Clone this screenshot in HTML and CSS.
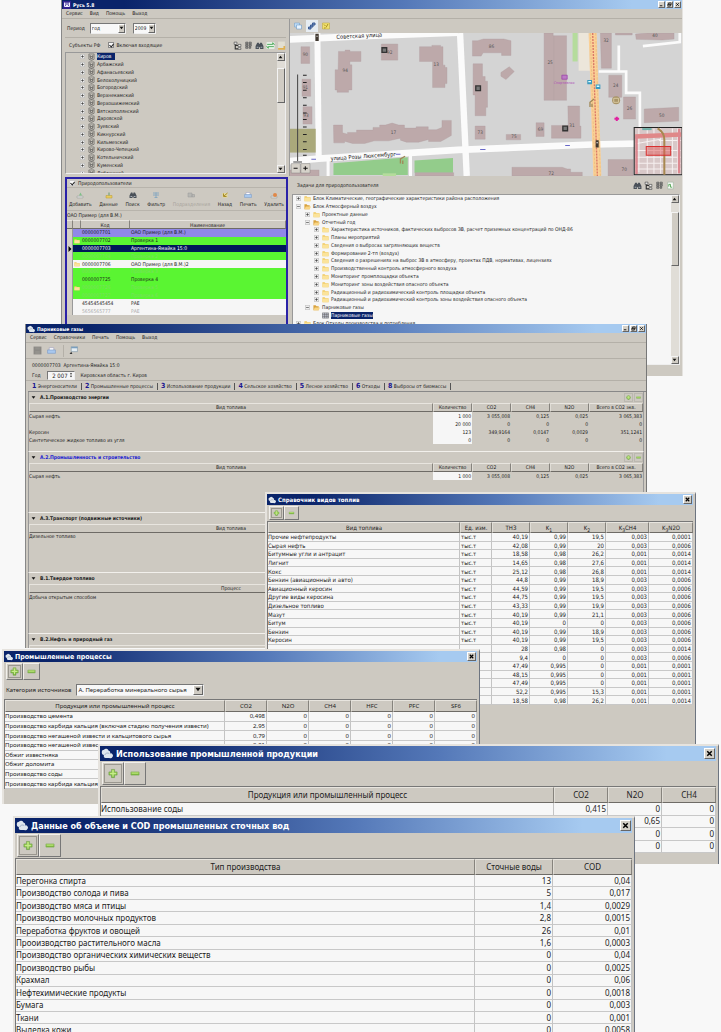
FILE: index.html
```html
<!DOCTYPE html>
<html lang="ru">
<head>
<meta charset="utf-8">
<title>Русь 5.8</title>
<link rel="stylesheet" href="styles.css">
</head>
<body>
<svg class="defs" aria-hidden="true">
<defs>
<linearGradient id="gr" x1="0" y1="0" x2="0" y2="1"><stop offset="0" stop-color="#b4e06a"/><stop offset="1" stop-color="#6fb42c"/></linearGradient>
<symbol id="plus" viewBox="0 0 16 16"><path d="M5.500 1.500h5v4h4v5h-4v4h-5v-4h-4v-5h4z" fill="url(#gr)" stroke="#6a9c48"/><path d="M7 3h2v4h4v2H9v4H7V9H3V7h4z" fill="#c6ea8c"/></symbol>
<symbol id="minus" viewBox="0 0 16 16"><path d="M1.500 5.500h13v5h-13z" fill="url(#gr)" stroke="#7fa85c"/><path d="M3 7h10v1H3z" fill="#c6ea8c"/></symbol>
<symbol id="cloud" viewBox="0 0 16 14"><path d="M1 5a3 3 0 0 1 3-3a3.500 3.500 0 0 1 6 1a3 3 0 0 1 2 4a3 3 0 0 1 3 5q-1 2-4 1H6a3 3 0 0 1-2-4Q1 9 1 5z" fill="#dfe6ee"/><path d="M5 9a4 4 0 0 1 6-2" stroke="#8fa0b8" fill="none"/></symbol>
<symbol id="folder" viewBox="0 0 16 16"><path d="M1 3h5l2 2h7v9H1z" fill="#f0c860"/><path d="M1 6h14v8H1z" fill="#fbe39a"/></symbol>
<symbol id="open" viewBox="0 0 16 16"><path d="M1 3h5l2 2h5v9H1z" fill="#d9a23c"/><path d="M4 8h12l-3 6H1z" fill="#f8d585"/></symbol>
<symbol id="crest" viewBox="0 0 16 16"><path d="M2 1h12v12l-6 3-6-3z" fill="#c8c4bc" stroke="#333"/><path d="M5 4v5l3-2 3 2V4M5 12h6" stroke="#333" stroke-width="1.500" fill="none"/></symbol>
<symbol id="expand" viewBox="0 0 9 9"><path d="M.5.5h8v8h-8z" fill="#eee" stroke="#aaa"/><path d="M2 4.500h5M4.500 2v5" stroke="#222"/></symbol>
<symbol id="collapse" viewBox="0 0 9 9"><path d="M.5.5h8v8h-8z" fill="#eee" stroke="#aaa"/><path d="M2 4.500h5" stroke="#222"/></symbol>
<symbol id="nodes" viewBox="0 0 16 16"><path d="M2 2h5v4H2zM9 6h5v4H9zM9 12h5v3H9z" fill="#eee" stroke="#333"/><path d="M4 6v8h5M4 8h5" stroke="#333" fill="none" stroke-width="2"/></symbol>
<symbol id="nodes2" viewBox="0 0 16 16"><path d="M3 2h4v3H3zM9 2h4v3H9zM3 6h4v3H3zM9 6h4v3H9zM3 10h4v3H3zM9 10h3v3H9z" fill="#999" stroke="#444"/></symbol>
<symbol id="binoc" viewBox="0 0 16 16"><path d="M4 3h3v2h2V3h3l3 6v5H9v-3H7v3H1V9z" fill="#4a5058"/><path d="M3 10h3v2H3zM10 10h3v2h-3z" fill="#a8b0b8"/></symbol>
<symbol id="refresh" viewBox="0 0 16 16"><path d="M1 2h14v12H1z" fill="#e8f4e8"/><path d="M2 6h10V3l3 4M14 10H4v3l-3-4" stroke="#38a048" stroke-width="1.500" fill="none"/></symbol>
<symbol id="sheet" viewBox="0 0 16 16"><path d="M2 1h12v14H2z" fill="#e2dfd2"/><path d="M2 14h11V9" stroke="#e0b050" stroke-width="3" fill="none"/></symbol>
<symbol id="doc" viewBox="0 0 16 16"><path d="M3 2h10v12H3z" fill="#f8fbf8" stroke="#9ab09a"/><path d="M5 10V6h3v5h3" stroke="#4ba04b" stroke-width="1.500" fill="none"/></symbol>
<symbol id="printer" viewBox="0 0 16 16"><path d="M4 3h8v5H4z" fill="#fff" stroke="#99b"/><path d="M1 7h14v6H1z" fill="#a9c8ee" stroke="#7898c4"/></symbol>
<symbol id="layers" viewBox="0 0 16 16"><path d="M1 2h10v8H1z" fill="#bfdcf5" stroke="#6a98c8"/><path d="M5 6h10v8H5z" fill="#e8f4ff" stroke="#5a8cc0"/></symbol>
<symbol id="down" viewBox="0 0 8 8"><path d="M1 2h6L4 6z" fill="#111"/></symbol>
<symbol id="up" viewBox="0 0 8 8"><path d="M1 6h6L4 2z" fill="#111"/></symbol>
<symbol id="close" viewBox="0 0 12 12"><path d="M3 3l6 6M9 3l-6 6" stroke="#000" stroke-width="2"/></symbol>
<symbol id="min" viewBox="0 0 12 12"><path d="M2 9h6" stroke="#000" stroke-width="2"/></symbol>
<symbol id="max" viewBox="0 0 12 12"><path d="M4 2h6v5H4zM2 5h6v5H2z" fill="#d0ccc4" stroke="#000" stroke-width="1.500"/></symbol>
</defs>
</svg>
<main class="desktop">

<section class="win main-win">
<header class="title"><svg class="ico" viewBox="0 0 16 16"><path d="M0 0h16v16H0z" fill="#30208c"/><path d="M3 3v8h10V3M6 3v6h4V3" stroke="#f0f0ff" stroke-width="2" fill="none"/></svg><h1>Русь 5.8</h1><span class="ctl"><button aria-label="Свернуть"><svg><use href="#min"/></svg></button><button aria-label="Развернуть"><svg><use href="#max"/></svg></button><button aria-label="Закрыть"><svg><use href="#close"/></svg></button></span></header>
<nav class="menu"><a href="#">Сервис</a><a href="#">Вид</a><a href="#">Помощь</a><a href="#">Выход</a></nav>
<div class="upper">
 <div class="regions">
  <div class="period"><label for="per">Период</label><span class="combo c-per"><select id="per"><option>год</option></select><i><svg><use href="#down"/></svg></i></span><span class="combo c-year"><select aria-label="Год"><option>2009</option></select><i><svg><use href="#down"/></svg></i></span></div>
  <div class="subj"><span>Субъекты РФ</span><input type="checkbox" id="inc" checked><label for="inc">Включая входящие</label><span class="tools"><svg><use href="#nodes"/></svg><svg><use href="#nodes2"/></svg><svg><use href="#binoc"/></svg><svg><use href="#refresh"/></svg><svg><use href="#sheet"/></svg></span></div>
  <div class="treebox">
   <ul class="tree t-reg">
    <li><svg><use href="#expand"/></svg><svg class="ic"><use href="#crest"/></svg><span class="sel wide">Киров</span></li>
    <li><svg><use href="#expand"/></svg><svg class="ic"><use href="#crest"/></svg><span>Арбажский</span></li>
    <li><svg><use href="#expand"/></svg><svg class="ic"><use href="#crest"/></svg><span>Афанасьевский</span></li>
    <li><svg><use href="#expand"/></svg><svg class="ic"><use href="#crest"/></svg><span>Белохолуницкий</span></li>
    <li><svg><use href="#expand"/></svg><svg class="ic"><use href="#crest"/></svg><span>Богородский</span></li>
    <li><svg><use href="#expand"/></svg><svg class="ic"><use href="#crest"/></svg><span>Верхнекамский</span></li>
    <li><svg><use href="#expand"/></svg><svg class="ic"><use href="#crest"/></svg><span>Верхошижемский</span></li>
    <li><svg><use href="#expand"/></svg><svg class="ic"><use href="#crest"/></svg><span>Вятскополянский</span></li>
    <li><svg><use href="#expand"/></svg><svg class="ic"><use href="#crest"/></svg><span>Даровской</span></li>
    <li><svg><use href="#expand"/></svg><svg class="ic"><use href="#crest"/></svg><span>Зуевский</span></li>
    <li><svg><use href="#expand"/></svg><svg class="ic"><use href="#crest"/></svg><span>Кикнурский</span></li>
    <li><svg><use href="#expand"/></svg><svg class="ic"><use href="#crest"/></svg><span>Кильмезский</span></li>
    <li><svg><use href="#expand"/></svg><svg class="ic"><use href="#crest"/></svg><span>Кирово-Чепецкий</span></li>
    <li><svg><use href="#expand"/></svg><svg class="ic"><use href="#crest"/></svg><span>Котельничский</span></li>
    <li><svg><use href="#expand"/></svg><svg class="ic"><use href="#crest"/></svg><span>Куменский</span></li>
    <li><svg><use href="#expand"/></svg><svg class="ic"><use href="#crest"/></svg><span>Лебяжский</span></li>
   </ul>
   <div class="scroll"><b><svg><use href="#up"/></svg></b><i class="thumb th1"></i><b><svg><use href="#down"/></svg></b></div>
  </div>
 </div>
 <div class="mapcol">
  <div class="maptools"><button aria-label="Слои"><svg><use href="#layers"/></svg></button><button class="on" aria-label="Объекты"><svg viewBox="0 0 16 16"><path d="M1 10h5v4H1zM5 6h5v4H5zM9 2h5v4H9z" fill="#6c8cc0" stroke="#3c5c94" stroke-width="2"/></svg></button><button aria-label="Легенда"><svg viewBox="0 0 16 16"><path d="M1 2h14v12H1z" fill="#f0e070" stroke="#b8a030"/><path d="M4 5l3 3M12 4l-4 7M4 12h3" stroke="#a89020" stroke-width="2"/></svg></button></div>
  <svg class="map" viewBox="15 99 1177 427" preserveAspectRatio="xMidYMid slice" role="img" aria-label="Карта">
   <path d="M15 99h1177v427H15z" fill="#d4d4d4"/>
   <g fill="none" stroke="#fbfbfb">
    <path d="M15 118L290 106 520 98" stroke-width="20"/>
    <path d="M100 99L104 470" stroke-width="18"/><path d="M526 99L546 526" stroke-width="19"/>
    <path d="M15 482L104 474 520 448 920 432 1192 426" stroke-width="20"/>
    <path d="M378 460v66M132 480v46" stroke-width="9"/>
    <path d="M940 214h82v64h41v145M1000 136v76M1072 138l110-12V99" stroke-width="8"/>
   </g>
   <path d="M862 99h15v85h-15z" fill="#b5dc9c"/><path d="M880 99h30l4 113h-34z" fill="#ece6da"/>
   <path d="M148 488l222-18v53H148zM390 480l115-8v44H390z" fill="#93cc8b"/><path d="M295 518h40v8h-40z" fill="#b5dc9c"/>
   <path d="M15 385h80v71H15z" fill="#aaa97b"/>
   <path d="M922 99L936 526" stroke="#fbd095" stroke-width="24"/><path d="M922 99L936 526" stroke="#d97868" stroke-width="4" stroke-dasharray="6 3"/><path d="M915 99L929 526M931 99L945 526" stroke="#e2bb80" stroke-width="2" stroke-dasharray="8 4"/>
   <g fill="#bda9aa" stroke="#ae9c9e">
    <path d="M51 140h26v50H51zM54 237h26v51H54zM57 319h27v52H57z"/>
    <path d="M163 154h20v-4h14v4h33v30h-33v10h6v75h-10v7h-34v-7h-6v-60h9z"/>
    <path d="M291 132h49v48h-49z"/>
    <path d="M405 140h37v-4h26v4h7v55h6v7h6v48h-6v12h-37v-78h-39z"/>
    <path d="M148 374h27v23l15 4v-5h27v-7h49v-8h20v-7h17l20-6 20 6h17v9h35v-4h36v9h24l17-7v-21h28v45l-17 10-15 8h-36v-6l-30 8h-36l-18-6v-6l-35 8h-43l-29 8h-36l-24-7v5h-32z"/>
    <path d="M563 122h15l18-5h60l22 5v44h-28v-8h-55l-6 10h-26zM565 191h28v38h8v14h7v78h-5v25h-32v-62h-6zM648 217l25-17 15 14-25 24-15-10zM571 377h30v39h-30zM664 402h43v16h-43zM753 367h24v41h-24z"/>
    <path d="M777 99h27v8h40v193h-67zM848 317h35v60h4v36h-88v-38h50zM945 99h33v105h-30zM970 225h39v66h-39zM1014 290h36v66h-36zM1076 326l103-5v41l-103 5zM1050 102l35-3h80v18l-35 3-78-2zM990 99h50v6h-50z"/>
    <path d="M681 500h150l15 5h10v10h35v11H681zM968 477h75v49h-75zM15 508h90v18H15zM392 516h115v10H392z"/>
    <path d="M806 107v193" fill="none"/>
   </g>
   <g class="mapnum"><text x="56" y="169">90</text><text x="56" y="266">91</text><text x="58" y="349">93</text><text x="175" y="214">94</text><text x="308" y="161">92</text><text x="447" y="199">13</text><text x="319" y="401">17</text><text x="612" y="145">86</text><text x="787" y="191">25</text><text x="578" y="402">73</text><text x="679" y="413">75</text><text x="758" y="392">69</text><text x="852" y="379">31</text><text x="954" y="126">32</text><text x="983" y="260">24</text><text x="1024" y="328">26</text><text x="1120" y="349">50</text><text x="1008" y="511">70</text><text x="790" y="523">72</text><text x="1100" y="112">40</text></g>
   <g fill="#777" stroke="#333" stroke-width="4"><path d="M293 143h14v14h-14zM573 257h14v14h-14zM833 377h14v14h-14z"/></g>
   <path d="M906 239h14v13h-14zM931 253h14v13h-14z" fill="#3a9ac0"/><path d="M909 242h8v4h-8zM934 256h8v4h-8z" fill="#dff"/>
   <path d="M830 225h16v12h-16z" fill="#bc7cc4" stroke="#9838a8" stroke-width="2"/><text x="806" y="251" class="ural">Спортивная</text>
   <circle cx="992" cy="300" r="12" fill="#a89468"/><path d="M985 294h14v12h-14z" stroke="#eee0b8" fill="none" stroke-width="2"/>
   <path d="M994 349v13M987 355h14" stroke="#e020a0" stroke-width="6"/>
   <path d="M914 320v-14l12-10M348 489v-14l14-8M920 310v10M355 480v10" stroke="#a08858" stroke-width="4" fill="none"/>
   <path d="M931 419h9v22h-9zM94 101h10v22H94z" fill="#403830"/><path d="M933 427h5M97 109h4" stroke="#ddd" stroke-width="3"/>
   <path d="M586 447h16M840 435h14M334 461h14M82 476h14" stroke="#6868c8" stroke-width="3"/>
   <text x="157" y="117" class="street" transform="rotate(-3 157 117)">Советская улица</text>
   <text x="140" y="480" class="street" transform="rotate(-4 140 480)">улица Розы Люксембург</text>
   <path d="M41 223v258M28 484h26" stroke="#444" stroke-width="3"/><path d="M57 225h11M57 247h11M57 270h11M57 292h11M57 315h11M57 338h11M57 357h11M57 380h11M57 402h11M57 424h11M57 447h11M57 464h11" stroke="#222" stroke-width="3"/>
   <g stroke="#666"><path d="M22 489h27v28H22zM51 489h27v28H51z" fill="#d6d2ca"/><path d="M29 503h12M58 503h13M64 497v12" stroke="#111" stroke-width="3"/></g>
   <path d="M1046 381h143v141h-143z" fill="#d8c8c8" stroke="#222" stroke-width="3"/>
   <path d="M1050 430L1125 416M1060 385v130M1085 384v135M1105 384v135M1125 384v135M1160 384v135M1176 384v135M1050 450h135M1050 470h135M1050 488h135M1050 505h135M1120 420h66" stroke="#f6f0f0" stroke-width="3"/>
   <path d="M1049 408L1186 402" stroke="#e08888" stroke-width="13"/><path d="M1053 405v115M1180 385v133" stroke="#dd8890" stroke-width="7"/><path d="M1116 384q20 12 20 34v104" stroke="#a88850" stroke-width="6" fill="none"/><path d="M1070 383h28v6h-28z" fill="#70b0a8"/>
   <path d="M1082 438h73v26h-73z" fill="#e05858" fill-opacity=".5" stroke="#d83030" stroke-width="3"/>
  </svg>
 </div>
</div>
<div class="lower">
 <div class="users">
  <div class="uhead"><input type="checkbox" id="usr" checked><label for="usr">Природопользователи</label></div>
  <div class="ubar"><button><svg viewBox="0 0 16 16"><path d="M2 10h12v4H2z" fill="#d8dcd8" stroke="#999"/><path d="M6 9l3-6 3 6z" fill="#7cc088"/></svg>Добавить</button><button><svg viewBox="0 0 16 16"><path d="M2 9h12v5H2z" fill="#e8cc60" stroke="#b89830"/><path d="M8 3v6" stroke="#8a8" stroke-width="3"/></svg>Данные</button><button><svg><use href="#binoc"/></svg>Поиск</button><button><svg viewBox="0 0 16 16"><path d="M2 4h12M2 8h12M8 3v11M5 13h6" stroke="#88a8c0" stroke-width="2"/></svg>Фильтр</button><button disabled><svg viewBox="0 0 16 16"><path d="M2 4h8v8H2zM10 7h5v5h-5z" fill="#b8b8b4" stroke="#999"/></svg>Подразделения</button><button><svg viewBox="0 0 16 16"><path d="M3 4h10v9H3z" fill="#e4d898"/><path d="M13 4L6 10M5 5v6h6" stroke="#a88c28" stroke-width="2" fill="none"/></svg>Назад</button><button><svg><use href="#printer"/></svg>Печать</button><button><svg viewBox="0 0 16 16"><path d="M2 10h12v4H2z" fill="#d8dcd8" stroke="#999"/><circle cx="10" cy="8" r="4" fill="#e08848"/></svg>Удалить</button></div>
  <div class="ucap">ОАО Пример (для В.М.)</div>
  <table class="utable">
   <colgroup><col class="w6"><col class="w8"><col class="w49"><col></colgroup>
   <thead><tr><th><th><th>Код<th>Наименование</thead>
   <tbody>
   <tr class="vio"><td><td><td>0000007701<td>ОАО Пример (для В.М.)
   <tr class="grn"><td><td><svg><use href="#folder"/></svg><td>0000007702<td>Проверка 1
   <tr class="nav"><td><svg viewBox="0 0 8 8"><path d="M2 0v8l4-4z" fill="#000"/></svg><td><td>0000007703<td>Аргентина-Ямайка 15:0
   <tr class="grn dim"><td><td><td>0000007704<td>Проверка 2
   <tr><td><td><svg><use href="#folder"/></svg><td>0000007706<td>ОАО Пример (для В.М.)2
   <tr class="grn dim"><td><td><td>0000007707<td>Проверка 3
   <tr class="grn"><td><td><td>0000007725<td>Проверка 4
   <tr class="grn dim"><td><td><svg><use href="#folder"/></svg><td>0000007726<td>Проверка 5
   <tr class="grn dim"><td><td><td>0000007727<td>Проверка 6
   <tr><td><td><td>45454545454<td>РАЕ
   <tr class="gray"><td><td><td>5656565777<td>РАЕ
   </tbody>
  </table>
 </div>
 <div class="tasks">
  <div class="thead"><span>Задачи для природопользователя</span><span class="tools"><svg><use href="#binoc"/></svg><svg><use href="#nodes"/></svg><svg><use href="#nodes2"/></svg><svg><use href="#doc"/></svg></span></div>
  <div class="treebox white">
   <ul class="tree t-task">
    <li><svg><use href="#expand"/></svg><svg class="ic"><use href="#folder"/></svg><span>Блок Климатические, географические характеристики района расположения</span></li>
    <li><svg><use href="#collapse"/></svg><svg class="ic"><use href="#open"/></svg><span>Блок Атмосферный воздух</span></li>
    <li class="l2"><svg><use href="#expand"/></svg><svg class="ic"><use href="#folder"/></svg><span>Проектные данные</span></li>
    <li class="l2"><svg><use href="#collapse"/></svg><svg class="ic"><use href="#open"/></svg><span>Отчетный год</span></li>
    <li class="l3"><svg><use href="#expand"/></svg><svg class="ic"><use href="#folder"/></svg><span>Характеристика источников, фактических выбросов ЗВ, расчет приземных концентраций по ОНД-86</span></li>
    <li class="l3"><svg><use href="#expand"/></svg><svg class="ic"><use href="#folder"/></svg><span>Планы мероприятий</span></li>
    <li class="l3"><svg><use href="#expand"/></svg><svg class="ic"><use href="#folder"/></svg><span>Сведения о выбросах загрязняющих веществ</span></li>
    <li class="l3"><svg><use href="#expand"/></svg><svg class="ic"><use href="#folder"/></svg><span>Формирование 2-тп (воздух)</span></li>
    <li class="l3"><svg><use href="#expand"/></svg><svg class="ic"><use href="#folder"/></svg><span>Сведения о разрешениях на выброс ЗВ в атмосферу, проектах ПДВ, нормативах, лицензиях</span></li>
    <li class="l3"><svg><use href="#expand"/></svg><svg class="ic"><use href="#folder"/></svg><span>Производственный контроль атмосферного воздуха</span></li>
    <li class="l3"><svg><use href="#expand"/></svg><svg class="ic"><use href="#folder"/></svg><span>Мониторинг промплощадки объекта</span></li>
    <li class="l3"><svg><use href="#expand"/></svg><svg class="ic"><use href="#folder"/></svg><span>Мониторинг зоны воздействия опасного объекта</span></li>
    <li class="l3"><svg><use href="#expand"/></svg><svg class="ic"><use href="#folder"/></svg><span>Радиационный и радиохимический контроль площадки объекта</span></li>
    <li class="l3"><svg><use href="#expand"/></svg><svg class="ic"><use href="#folder"/></svg><span>Радиационный и радиохимический контроль зоны воздействия опасного объекта</span></li>
    <li class="l2"><svg><use href="#collapse"/></svg><svg class="ic"><use href="#open"/></svg><span>Парниковые газы</span></li>
    <li class="l3"><svg></svg><svg class="ic" viewBox="0 0 16 16"><path d="M1 2h14v12H1z" fill="#c8ccd8" stroke="#444"/><path d="M1 6h14M1 10h14M6 2v12M11 2v12" stroke="#444"/></svg><span class="sel">Парниковые газы</span></li>
    <li><svg><use href="#expand"/></svg><svg class="ic"><use href="#folder"/></svg><span>Блок Отходы производства и потребления</span></li>
   </ul>
   <div class="scroll"><b><svg><use href="#up"/></svg></b><i class="thumb th2"></i><b><svg><use href="#down"/></svg></b></div>
  </div>
 </div>
</div>
</section>

<section class="win gas-win">
<header class="title"><svg class="ico"><use href="#cloud"/></svg><h2>Парниковые газы</h2><span class="ctl"><button aria-label="Свернуть"><svg><use href="#min"/></svg></button><button aria-label="Развернуть"><svg><use href="#max"/></svg></button><button aria-label="Закрыть"><svg><use href="#close"/></svg></button></span></header>
<nav class="menu"><a href="#">Сервис</a><a href="#">Справочники</a><a href="#">Печать</a><a href="#">Помощь</a><a href="#">Выход</a></nav>
<div class="gbar"><button aria-label="Сохранить"><svg viewBox="0 0 16 16"><path d="M1 1h14v14H1z" fill="#8c8a86"/><path d="M4 2h8v4H4zM4 9h8v5H4z" fill="#94928d"/></svg></button><button aria-label="Печать"><svg><use href="#printer"/></svg></button><i></i><button aria-label="Окно"><svg viewBox="0 0 16 16"><path d="M4 1h11v9H4z" fill="#e6eef4" stroke="#7890a0"/><path d="M4 3h11" stroke="#6c94b8" stroke-width="2"/><path d="M4 10l-3 4h5z" fill="#333"/></svg></button></div>
<div class="ginfo"><p>0000007703&nbsp; Аргентина-Ямайка 15:0</p><p><label for="yr">Год</label><span class="spin"><input id="yr" value="2 007"><i><svg><use href="#up"/></svg><svg><use href="#down"/></svg></i></span><span>Кировская область г. Киров</span></p></div>
<nav class="tabs"><a href="#"><b>1</b> Энергоносители</a><a href="#"><b>2</b> Промышленные процессы</a><a href="#"><b>3</b> Использование продукции</a><a href="#"><b>4</b> Сельское хозяйство</a><a href="#"><b>5</b> Лесное хозяйство</a><a href="#"><b>6</b> Отходы</a><a href="#"><b>8</b> Выбросы от биомассы</a></nav>
<div class="groups">
 <section><h3><svg><use href="#down"/></svg>А.1.Производство энергии<span class="pm"><button aria-label="Добавить"><svg><use href="#plus"/></svg></button><button aria-label="Удалить"><svg><use href="#minus"/></svg></button></span></h3>
 <table class="gt"><colgroup><col><col class="w39"><col class="w39"><col class="w39"><col class="w39"><col class="w54"></colgroup><thead><tr><th>Вид топлива<th>Количество<th>CO2<th>CH4<th>N2O<th>Всего в CO2 экв.</thead><tbody>
 <tr><td>Сырая нефть<td>1 000<td>3 055,008<td>0,125<td>0,025<td>3 065,383
 <tr><td><td>20 000<td>0<td>0<td>0<td>0
 <tr><td>Керосин<td>123<td>349,9164<td>0,0147<td>0,0029<td>351,1241
 <tr><td>Синтетическое жидкое топливо из угля<td>0<td>0<td>0<td>0<td>0</tbody></table></section>
 <section><h3 class="blue"><svg><use href="#down"/></svg>А.2.Промышленность и строительство<span class="pm"><button aria-label="Добавить"><svg><use href="#plus"/></svg></button><button aria-label="Удалить"><svg><use href="#minus"/></svg></button></span></h3>
 <table class="gt"><colgroup><col><col class="w39"><col class="w39"><col class="w39"><col class="w39"><col class="w54"></colgroup><thead><tr><th>Вид топлива<th>Количество<th>CO2<th>CH4<th>N2O<th>Всего в CO2 экв.</thead><tbody>
 <tr><td>Сырая нефть<td>1 000<td>3 055,008<td>0,125<td>0,025<td>3 065,383</tbody></table></section>
 <section><h3><svg><use href="#down"/></svg>А.3.Транспорт (подвижные источники)</h3>
 <table class="gt"><colgroup><col><col class="w210"></colgroup><thead><tr><th>Вид топлива<th></thead><tbody><tr><td>Дизельное топливо<td></tbody></table></section>
 <section><h3><svg><use href="#down"/></svg>В.1.Твердое топливо</h3>
 <table class="gt"><colgroup><col><col class="w210"></colgroup><thead><tr><th>Процесс<th></thead><tbody><tr><td>Добыча открытым способом<td></tbody></table></section>
 <section><h3><svg><use href="#down"/></svg>В.2.Нефть и природный газ</h3>
 <table class="gt"><colgroup><col><col class="w210"></colgroup><thead><tr><th><th></thead></table></section>
</div>
</section>

<section class="win dlg fuel-win">
<header class="title"><svg class="ico"><use href="#cloud"/></svg><h2>Справочник видов топлив</h2><span class="ctl"><button aria-label="Закрыть"><svg><use href="#close"/></svg></button></span></header>
<div class="pmbar"><button aria-label="Добавить"><svg><use href="#plus"/></svg></button><button aria-label="Удалить"><svg><use href="#minus"/></svg></button></div>
<table class="dt"><colgroup><col><col class="w32"><col class="w38"><col class="w38"><col class="w38"><col class="w43"><col class="w44"></colgroup>
<thead><tr><th>Вид топлива<th>Ед. изм.<th>ТНЗ<th>K<sub>1</sub><th>K<sub>2</sub><th>K<sub>3</sub>CH4<th>K<sub>3</sub>N2O</thead><tbody>
<tr><td>Прочие нефтепродукты<td>тыс.т<td>40,19<td>0,99<td>19,5<td>0,003<td>0,0001
<tr><td>Сырая нефть<td>тыс.т<td>42,08<td>0,99<td>20<td>0,003<td>0,0006
<tr><td>Битумные угли и антрацит<td>тыс.т<td>18,58<td>0,98<td>26,2<td>0,001<td>0,0014
<tr><td>Лигнит<td>тыс.т<td>14,65<td>0,98<td>27,6<td>0,001<td>0,0014
<tr><td>Кокс<td>тыс.т<td>25,12<td>0,98<td>26,8<td>0,001<td>0,0014
<tr><td>Бензин (авиационный и авто)<td>тыс.т<td>44,8<td>0,99<td>18,9<td>0,003<td>0,0006
<tr><td>Авиационный керосин<td>тыс.т<td>44,59<td>0,99<td>19,5<td>0,003<td>0,0006
<tr><td>Другие виды керосина<td>тыс.т<td>44,75<td>0,99<td>19,5<td>0,003<td>0,0006
<tr><td>Дизельное топливо<td>тыс.т<td>43,33<td>0,99<td>19,9<td>0,003<td>0,0006
<tr><td>Мазут<td>тыс.т<td>40,19<td>0,99<td>21,1<td>0,003<td>0,0006
<tr><td>Битум<td>тыс.т<td>40,19<td>0<td>0<td>0,003<td>0,0006
<tr><td>Бензин<td>тыс.т<td>40,19<td>0,99<td>18,9<td>0,003<td>0,0006
<tr><td>Керосин<td>тыс.т<td>40,19<td>0,99<td>19,5<td>0,003<td>0,0006
<tr><td><td><td>28<td>0,98<td>0<td>0,003<td>0,0014
<tr><td><td><td>9,4<td>0<td>0<td>0,003<td>0,0006
<tr><td><td><td>47,49<td>0,995<td>0<td>0,001<td>0,0001
<tr><td><td><td>48,15<td>0,995<td>0<td>0,001<td>0,0001
<tr><td><td><td>47,49<td>0,995<td>0<td>0,001<td>0,0001
<tr><td><td><td>52,2<td>0,995<td>15,3<td>0,001<td>0,0001
<tr><td><td><td>18,58<td>0,98<td>26,2<td>0,001<td>0,0014
</tbody></table>
</section>

<section class="win dlg proc-win">
<header class="title"><svg class="ico"><use href="#cloud"/></svg><h2>Промышленные процессы</h2><span class="ctl"><button aria-label="Закрыть"><svg><use href="#close"/></svg></button></span></header>
<div class="pmbar"><button aria-label="Добавить"><svg><use href="#plus"/></svg></button><button aria-label="Удалить"><svg><use href="#minus"/></svg></button></div>
<div class="cat"><label for="cat">Категория источников</label><span class="combo"><select id="cat"><option>А. Переработка минерального сырья</option></select><i><svg><use href="#down"/></svg></i></span></div>
<table class="dt"><colgroup><col><col class="w42"><col class="w42"><col class="w42"><col class="w42"><col class="w42"><col class="w42"></colgroup>
<thead><tr><th>Продукция или промышленный процесс<th>CO2<th>N2O<th>CH4<th>HFC<th>PFC<th>SF6</thead><tbody>
<tr><td>Производство цемента<td>0,498<td>0<td>0<td>0<td>0<td>0
<tr><td>Производство карбида кальция (включая стадию получения извести)<td>2,95<td>0<td>0<td>0<td>0<td>0
<tr><td>Производство негашеной извести и кальцитового сырья<td>0,79<td>0<td>0<td>0<td>0<td>0
<tr><td>Производство негашеной извести из доломитового сырья<td>0,91<td>0<td>0<td>0<td>0<td>0
<tr><td>Обжиг известняка<td><td><td><td><td><td>
<tr><td>Обжиг доломита<td><td><td><td><td><td>
<tr><td>Производство соды<td><td><td><td><td><td>
<tr><td>Производство карбида кальция<td><td><td><td><td><td>
</tbody></table>
</section>

<section class="win dlg big use-win">
<header class="title"><svg class="ico"><use href="#cloud"/></svg><h2>Использование промышленной продукции</h2><span class="ctl"><button aria-label="Закрыть"><svg><use href="#close"/></svg></button></span></header>
<div class="pmbar"><button aria-label="Добавить"><svg><use href="#plus"/></svg></button><button aria-label="Удалить"><svg><use href="#minus"/></svg></button></div>
<table class="dt"><colgroup><col><col class="w54"><col class="w54"><col class="w54"></colgroup>
<thead><tr><th>Продукция или промышленный процесс<th>CO2<th>N2O<th>CH4</thead><tbody>
<tr><td>Использование соды<td>0,415<td>0<td>0
<tr><td><td><td>0,65<td>0
<tr><td><td><td>0<td>0
<tr><td><td><td>0<td>0
</tbody></table>
</section>

<section class="win dlg big cod-win">
<header class="title"><svg class="ico"><use href="#cloud"/></svg><h2>Данные об объеме и COD промышленных сточных вод</h2><span class="ctl"><button aria-label="Закрыть"><svg><use href="#close"/></svg></button></span></header>
<div class="pmbar"><button aria-label="Добавить"><svg><use href="#plus"/></svg></button><button aria-label="Удалить"><svg><use href="#minus"/></svg></button></div>
<table class="dt"><colgroup><col><col class="w78"><col class="w79"></colgroup>
<thead><tr><th>Тип производства<th>Сточные воды<th>COD</thead><tbody>
<tr><td>Перегонка спирта<td>13<td>0,04
<tr><td>Производство солода и пива<td>5<td>0,017
<tr><td>Производство мяса и птицы<td>1,4<td>0,0029
<tr><td>Производство молочных продуктов<td>2,8<td>0,0015
<tr><td>Переработка фруктов и овощей<td>26<td>0,01
<tr><td>Прооизводство растительного масла<td>1,6<td>0,0003
<tr><td>Производство органических химических веществ<td>0<td>0,04
<tr><td>Производство рыбы<td>0<td>0,0025
<tr><td>Крахмал<td>0<td>0,06
<tr><td>Нефтехимические продукты<td>0<td>0,0018
<tr><td>Бумага<td>0<td>0,003
<tr><td>Ткани<td>0<td>0,001
<tr><td>Выделка кожи<td>0<td>0,0058
</tbody></table>
</section>
</main>
</body>
</html>
```

FILE: styles.css
```css
* { box-sizing: border-box; }
body, h1, h2, h3, p, ul { margin: 0; padding: 0; }
html, body { height: 100%; }
body { background: #f8f8f8; color: #1c1c1c; font: 5px/7px "DejaVu Sans Condensed", "DejaVu Sans", sans-serif; }
button, input, select { font: inherit; color: inherit; margin: 0; padding: 0; border: 0; background: none; border-radius: 0; }
a { color: inherit; text-decoration: none; }
svg { display: block; }
.defs { position: absolute; width: 0; height: 0; }
.desktop { position: relative; height: 100%; overflow: hidden; white-space: nowrap; }

/* windows */
.win { position: absolute; display: flex; flex-direction: column; overflow: hidden; background: #cdc9c1; }
.main-win { left: 61px; right: 38px; top: 0; height: 376px; border-right: 1px solid #e4e2de; border-left: 1px solid #888; }
.gas-win { left: 25px; right: 74px; top: 324px; height: 324px; border-left: 1px solid #888; border-right: 1px solid #777; }
.fuel-win { left: 265px; right: 25px; top: 492px; height: 252px; font-size: 6px; line-height: 7px; }
.proc-win { left: 2px; right: 241px; top: 649px; height: 155px; font-size: 6px; line-height: 8px; }
.use-win { left: 98px; right: 2px; top: 744px; height: 120px; }
.cod-win { left: 13px; right: 86px; top: 816px; height: 230px; }
.big { font-size: 8px; line-height: 10px; }
.proc-win .dt, .cat, .big .dt { font-family: "Noto Sans", "Open Sans", sans-serif; }
.dlg { border: 1px solid #e6e3de; border-width: 2px 2px 0 2px; border-right: 1px solid #6d7480; padding-right: 2px; }

.title { flex: none; display: flex; align-items: center; gap: 2px; height: 9px; padding: 0 1px; background: linear-gradient(90deg, #0a246a 10%, #5478b8 55%, #a6caf0 92%); color: #fff; }
.title h1, .title h2 { flex: 1; font-size: 5px; line-height: 8px; font-weight: bold; }
.ico { width: 8px; height: 8px; }
.ctl { display: flex; gap: 1px; }
.ctl button { width: 7px; height: 7px; background: #d4d0c8; border: 1px solid #666; border-top-color: #fff; border-left-color: #fff; }
.ctl svg { width: 5px; height: 5px; }
.fuel-win .title { height: 11px; }
.fuel-win h2 { font-size: 6px; }
.proc-win .title { height: 11px; }
.proc-win h2 { font-size: 7px; }
.dlg .ctl button { width: 9px; height: 9px; }
.dlg .ctl svg { width: 7px; height: 7px; }
.big .title { height: 15px; gap: 3px; }
.big .title h2 { font-size: 9px; line-height: 12px; }
.big .ico { width: 12px; height: 11px; }
.big .ctl button { width: 11px; height: 11px; }
.big .ctl svg { width: 9px; height: 9px; }

.menu { flex: none; display: flex; align-items: center; gap: 7px; height: 10px; padding: 0 4px; border-bottom: 1px solid #b4b0a8; }

/* upper half */
.upper { flex: none; display: flex; height: 157px; }
.regions { width: 228px; display: flex; flex-direction: column; padding: 0 3px 2px 3px; border-right: 1px solid #999; }
.period { flex: none; height: 19px; display: flex; align-items: center; gap: 5px; padding-left: 2px; border-bottom: 1px solid #b4b0a8; }
.combo { display: flex; align-items: center; height: 11px; background: #f8f8f8; border: 1px solid #777; border-right-color: #eee; border-bottom-color: #eee; }
.combo select { flex: 1; appearance: none; padding-left: 1px; height: 9px; }
.combo i { width: 7px; height: 9px; background: #d0ccc4; border: 1px solid #fff; border-right-color: #666; border-bottom-color: #666; }
.combo i svg, .scroll svg { width: 5px; height: 6px; }
.c-per { width: 36px; }
.c-year { width: 23px; margin-left: 2px; }
.subj { flex: none; height: 14px; display: flex; align-items: center; gap: 2px; padding-left: 4px; }
input[type=checkbox] { appearance: none; width: 6px; height: 6px; background: #f8f8f8; border: 1px solid #888; position: relative; }
input[type=checkbox]::after { content: ""; position: absolute; left: 1px; top: 0; width: 2px; height: 3px; border: solid #222; border-width: 0 1px 1px 0; transform: rotate(40deg); }
.subj input { margin-left: 6px; }
.tools { display: flex; gap: 2px; margin-left: auto; }
.tools svg { width: 9px; height: 9px; }
.treebox { flex: 1; min-height: 0; display: flex; overflow: hidden; border: 1px solid #999; border-right-color: #eee; border-bottom-color: #eee; }
.white { background: #f6f6f6; }
.tree { flex: 1; list-style: none; display: grid; grid-auto-rows: 1fr; }
.t-reg { height: 124px; padding-left: 14px; }
.t-task { height: 132px; padding-left: 3px; }
.tree li { display: flex; align-items: center; gap: 3px; min-height: 0; }
.tree li svg { width: 5px; height: 5px; }
.tree li svg.ic { width: 7px; height: 7px; }
.t-reg li svg.ic { width: 7px; height: 8px; }
.tree li svg.ic + span { margin-left: -1px; }
.l2 { padding-left: 9px; }
.l3 { padding-left: 18px; }
.sel { background: #0a246a; color: #fff; }
.wide { padding-right: 4px; }
.scroll { width: 8px; display: flex; flex-direction: column; background: #e0ddd7; }
.scroll b { height: 8px; background: #d0ccc4; border: 1px solid #f4f4f4; border-right-color: #666; border-bottom-color: #666; }
.thumb { background: #d0ccc4; border: 1px solid #f4f4f4; border-right-color: #666; border-bottom-color: #666; }
.th1 { height: 35px; margin: 7px 0 auto; }
.th2 { height: 54px; margin: 9px 0 auto; }
.mapcol { flex: 1; display: flex; flex-direction: column; }
.maptools { flex: none; height: 14px; display: flex; gap: 2px; padding: 1px 2px; }
.maptools button { width: 12px; height: 12px; padding: 2px; }
.maptools .on { background: #e6ecf2; }
.maptools svg { width: 8px; height: 8px; }
.map { flex: 1; min-height: 0; width: 100%; }
.mapnum { font-size: 14px; fill: #555; }
.street { font-size: 17px; fill: #222; }
.ural { font-size: 11px; fill: #b050b8; }

/* lower half */
.lower { flex: 1; min-height: 0; display: flex; gap: 4px; padding: 1px 2px 11px 3px; }
.users { width: 223px; overflow: hidden; border: 2px solid #2a22a8; }
.uhead { height: 9px; display: flex; align-items: center; gap: 3px; padding-left: 2px; border-bottom: 1px solid #b8b4ac; }
.uhead input { border-color: #ccc; }
.ubar { height: 22px; display: flex; justify-content: space-between; align-items: end; padding: 0 2px 2px; }
.ubar button { display: flex; flex-direction: column; align-items: center; gap: 2px; }
.ubar svg { width: 8px; height: 8px; }
.ubar button:disabled { color: #a8a49c; }
.ucap { height: 10px; line-height: 9px; border-top: 1px solid #b8b4ac; }
table { width: 100%; table-layout: fixed; border-collapse: separate; border-spacing: 0; }
th, td { padding: 0 1px; overflow: hidden; }
th { font-weight: normal; text-align: center; background: #cdc9c1; border: 1px solid; border-color: #e8e5df #86837d #6e6b66 #e0ddd6; }
.utable { height: 95px; background: #f6f6f6; }
.utable th { height: 9px; line-height: 6px; border-left: 0; }
.utable td { line-height: 7px; text-align: left; }
.utable td:first-child { background: #d4d0c8; border-right: 1px solid #999; padding: 0; }
.utable td svg { width: 6px; height: 6px; }
.utable .vio td + td { background: #9088e8; }
.utable .grn td + td { background: #5af532; }
.utable .nav td + td { background: #001858; color: #fff; }
.utable .dim td { color: #7be060; }
.utable .gray td { color: #aaa; }
.w6 { width: 6px; } .w8 { width: 8px; } .w49 { width: 49px; } .w32 { width: 32px; }
.w38 { width: 38px; } .w39 { width: 39px; } .w42 { width: 42px; } .w43 { width: 43px; }
.w44 { width: 44px; } .w54 { width: 54px; } .w78 { width: 78px; } .w79 { width: 79px; } .w210 { width: 210px; }
.tasks { flex: 1; display: flex; flex-direction: column; }
.thead { flex: none; height: 17px; display: flex; align-items: center; padding: 0 5px; }

/* greenhouse gases */
.gbar { flex: none; height: 16px; display: flex; align-items: center; gap: 5px; padding-left: 7px; border-bottom: 1px solid #b4b0a8; }
.gbar svg { width: 9px; height: 9px; }
.gbar i { width: 1px; height: 12px; background: #b4b0a8; margin-left: 2px; }
.ginfo { flex: none; height: 22px; padding: 1px 0 0 6px; border-bottom: 1px solid #b4b0a8; }
.ginfo p { display: flex; align-items: center; height: 10px; gap: 6px; }
.spin { display: flex; width: 28px; height: 9px; background: #f6f6f6; border: 1px solid #777; border-right-color: #eee; border-bottom-color: #eee; }
.spin input { flex: 1; min-width: 0; height: 7px; text-align: right; font-size: 6px; }
.spin i svg { width: 6px; height: 3px; }
.tabs { flex: none; height: 10px; display: flex; align-items: center; padding-left: 3px; }
.tabs a { padding: 0 4px 0 3px; border-right: 1px solid #555; }
.tabs b { color: #1a1490; font-size: 7px; }
.groups { flex: none; height: 303px; display: grid; grid-template-rows: repeat(5, 1fr); border-top: 1px solid #888; padding-right: 2px; margin-left: 2px; }
.groups section { min-height: 0; border-bottom: 1px solid #f2f0ec; border-left: 1px solid #999; border-right: 1px solid #999; overflow: hidden; }
h3 { display: flex; align-items: center; gap: 4px; height: 11px; padding-left: 2px; font-size: 5px; line-height: 7px; }
h3 > svg { width: 5px; height: 5px; }
.blue { color: #1c1cd0; }
.pm { display: flex; gap: 1px; margin-left: auto; }
.pm button { width: 9px; height: 9px; border: 1px solid #bbb8b0; padding: 1px; }
.pm svg { width: 5px; height: 5px; }
.gt th { height: 9px; }
.gt tbody tr { height: 8px; }
.gt td { line-height: 7px; height: 8px; text-align: right; }
.gt td:first-child { text-align: left; padding-left: 0; }
.gt td:nth-child(2):not(:last-child) { background: #f6f6f6; }

/* dialogs */
.pmbar { flex: none; display: flex; height: 16px; padding: 1px 0 1px 2px; }
.pmbar button { width: 15px; padding: 3px; border: 1px solid #f2f0ec; border-right-color: #777; border-bottom-color: #777; }
.pmbar button:first-child { outline: 1px solid #9a978f; outline-offset: -3px; }
.pmbar svg { width: 100%; height: 100%; }
.proc-win .pmbar { height: 19px; }
.proc-win .pmbar button { width: 17px; }
.big .pmbar { height: 25px; }
.big .pmbar button { width: 22px; padding: 5px; }
.cat { flex: none; height: 18px; display: flex; align-items: center; gap: 5px; padding-left: 2px; }
.cat .combo { height: 12px; width: 128px; }
.cat .combo i { width: 10px; height: 10px; }
.cat .combo i svg { width: 8px; height: 7px; }
.dt { flex: none; border-left: 1px solid #777; border-top: 1px solid #777; }
.dt td { height: 1px; background: #f7f7f7; border-right: 1px solid #c4c4c4; border-bottom: 1px solid #c8c8c8; text-align: right; }
.dt td:first-child { text-align: left; padding: 0; }
.fuel-win td:nth-child(2) { text-align: left; }
.dt sub { font-size: 5px; line-height: 0; }
.fuel-win .dt { height: 184px; }
.fuel-win .dt th { height: 11px; }
.proc-win .dt { height: 90px; }
.proc-win .dt th { height: 12px; }
.use-win .dt { height: 67px; }
.big .dt th { height: 16px; }
.cod-win .dt { height: 179px; }
```
